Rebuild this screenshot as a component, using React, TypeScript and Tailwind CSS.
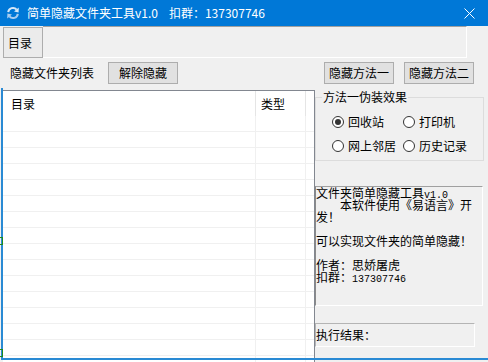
import React from "react";

const cjk = { fontFamily: '"Noto Sans CJK SC", "Noto Sans", sans-serif' };
const mono = { fontFamily: '"Liberation Mono", monospace' };

function Radio({ checked, label }: { checked?: boolean; label: string }) {
  return (
    <div className="flex items-center w-[71px] h-[18px]">
      <div className="w-[12px] h-[12px] rounded-full border border-[#333333] bg-white flex items-center justify-center shrink-0">
        {checked && <div className="w-[6px] h-[6px] rounded-full bg-[#333333]" />}
      </div>
      <span className="ml-[4px] text-[12px] leading-[16px] text-black whitespace-nowrap">{label}</span>
    </div>
  );
}

function Btn({ label, className }: { label: string; className?: string }) {
  return (
    <div
      className={
        "w-[70px] h-[22px] border border-[#adadad] bg-[#e1e1e1] flex items-center justify-center text-[12px] leading-[16px] text-black " +
        (className || "")
      }
    >
      {label}
    </div>
  );
}

export default function App() {
  const rows = Array.from({ length: 16 });
  return (
    <div className="w-[488px] h-[362px] bg-[#f0f0f0] relative overflow-hidden" style={cjk}>
      {/* Title bar */}
      <div className="h-[26px] bg-[#0078d7] flex items-center">
        <svg className="ml-[6px]" width="14" height="14" viewBox="0 0 14 14">
          <path d="M2.2 6.2 A4.8 4.8 0 0 1 10.6 3.6" stroke="#d6e8f8" strokeWidth="2" fill="none" />
          <polygon points="12.8,1.6 12.6,6.6 8,5.4" fill="#d6e8f8" />
          <path d="M11.8 7.8 A4.8 4.8 0 0 1 3.4 10.4" stroke="#a9cdef" strokeWidth="2" fill="none" />
          <polygon points="1.2,12.4 1.4,7.4 6,8.6" fill="#a9cdef" />
        </svg>
        <span className="ml-[7px] text-white text-[12px] leading-[16px] whitespace-nowrap">
          简单隐藏文件夹工具v1.0
        </span>
        <span className="ml-[11px] text-white text-[12px] leading-[16px] whitespace-nowrap">扣群：137307746</span>
        <svg className="ml-auto mr-[13px]" width="11" height="11" viewBox="0 0 11 11">
          <path d="M0.5 0.5 L10.5 10.5 M10.5 0.5 L0.5 10.5" stroke="#ffffff" strokeWidth="1" />
        </svg>
      </div>

      {/* Tab strip */}
      <div className="h-[32px] flex pl-[3px]">
        <div className="mt-[1px] w-[40px] h-[31px] border border-[#adadad] bg-[#ebebeb] flex items-center pl-[4px] text-[12px] leading-[16px] text-black">
          目录
        </div>
        <div className="w-[424px] h-[32px] border-t border-t-[#a0a0a0] border-r border-r-white border-b border-b-white" />
      </div>

      {/* Toolbar row */}
      <div className="mt-[4px] h-[22px] flex items-center">
        <span className="ml-[10px] w-[98px] text-[12px] leading-[16px] text-black">隐藏文件夹列表</span>
        <Btn label="解除隐藏" />
        <Btn label="隐藏方法一" className="ml-[146px]" />
        <Btn label="隐藏方法二" className="ml-[10px]" />
      </div>

      {/* Main area */}
      <div className="mt-[6px] h-[272px] flex">
        {/* List view */}
        <div className="ml-[3px] w-[312px] h-full bg-white border-t border-r border-[#828790] overflow-hidden">
          <div className="h-[25px] flex text-[12px] leading-[16px] text-black">
            <div className="w-[253px] h-full flex items-center pl-[8px] border-r border-[#e5e5e5]">目录</div>
            <div className="w-[50px] h-full flex items-center pl-[5px] border-r border-[#e5e5e5]">类型</div>
            <div className="flex-1" />
          </div>
          {rows.map((_, i) => (
            <div key={i} className="h-[16px] flex border-b border-[#f0f0f0]">
              <div className="w-[253px] h-full border-r border-[#f0f0f0]" />
              <div className="w-[50px] h-full border-r border-[#f0f0f0]" />
            </div>
          ))}
        </div>

        {/* Right column */}
        <div className="flex-1 flex flex-col">
          <div className="mt-[7px] w-[169px] h-[64px] border border-[#dcdcdc] relative pt-[15px] pl-[16px]">
            <span className="absolute -top-[9px] left-[6px] bg-[#f0f0f0] px-[1px] text-[12px] leading-[16px] text-black whitespace-nowrap">
              方法一伪装效果
            </span>
            <div className="flex flex-col gap-[6px]">
              <div className="flex">
                <Radio checked label="回收站" />
                <Radio label="打印机" />
              </div>
              <div className="flex">
                <Radio label="网上邻居" />
                <Radio label="历史记录" />
              </div>
            </div>
          </div>

          <div className="mt-[25px] w-[168px] h-[120px] border-t border-l border-t-[#a0a0a0] border-l-[#8a8a8a] border-r border-b border-r-white border-b-white text-[12px] leading-[12px] text-black overflow-hidden">
            <div className="h-[12px] whitespace-nowrap">
              文件夹简单隐藏工具<span className="text-[10px]" style={mono}>v1.0</span>
            </div>
            <div className="h-[12px] whitespace-nowrap pl-[24px]">本软件使用《易语言》开</div>
            <div className="h-[12px]">发！</div>
            <div className="h-[12px]" />
            <div className="h-[12px] whitespace-nowrap">可以实现文件夹的简单隐藏！</div>
            <div className="h-[12px]" />
            <div className="h-[12px] whitespace-nowrap">作者：思娇屠虎</div>
            <div className="h-[12px] whitespace-nowrap">
              扣群：<span className="text-[10px]" style={mono}>137307746</span>
            </div>
          </div>

          <div className="mt-[17px] w-[160px] h-[24px] border-t border-l border-[#b4b4b4] border-r border-b border-r-white border-b-white flex items-center text-[12px] leading-[16px] text-black">
            执行结果：
          </div>
        </div>
      </div>

      {/* Window border overlays */}
      <div className="absolute left-[1px] top-[88px] w-[2px] h-[272px] bg-[#2a8ad4]" />
      <div className="absolute left-[1px] right-0 top-[358px] h-[2px] bg-[#2a8ad4]" />
      <div className="absolute -left-[1px] top-[237px] w-[4px] h-[8px] border border-[#1d8a1d]" />
      <div className="absolute -left-[1px] top-[349px] w-[4px] h-[8px] border border-[#1d8a1d]" />
    </div>
  );
}
